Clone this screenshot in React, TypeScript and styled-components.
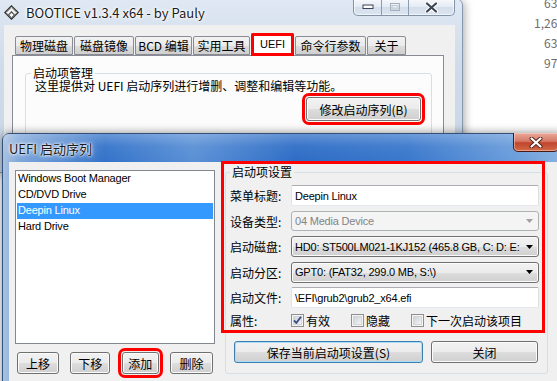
import React from "react";
import styled, { createGlobalStyle, css } from "styled-components";

const UI_FONT = `"Noto Sans CJK SC", "Liberation Sans", sans-serif`;
const LATIN_FONT = `"Liberation Sans", "Noto Sans CJK SC", sans-serif`;

const GlobalStyle = createGlobalStyle`
  *, *::before, *::after { box-sizing: border-box; }
  html, body { margin: 0; padding: 0; background: #fff; }
  body {
    width: 557px; height: 381px; overflow: hidden;
    font-family: ${UI_FONT}; font-size: 12px; color: #000;
  }
`;

const Desktop = styled.div`
  position: relative;
  width: 557px;
  height: 381px;
  overflow: hidden;
  background: #fff;
`;

const BackList = styled.div`
  position: absolute;
  top: -7px;
  right: -7px;
  width: 60px;
  display: flex;
  flex-direction: column;
  align-items: flex-end;
  font-size: 12px;
  line-height: 20px;
  color: #6d6d6d;
`;

/* ---------- main (inactive) window ---------- */
const MainWindow = styled.div`
  position: absolute;
  left: -4px;
  top: -2px;
  width: 467px;
  height: 175px;
  display: flex;
  flex-direction: column;
  padding: 0 7px 7px 7px;
  border: 1px solid #8798ad;
  border-radius: 7px 7px 0 0;
  background: linear-gradient(180deg, #dfe8f3 0%, #cfdbea 40%, #c8d6e7 100%);
  box-shadow: 2px 2px 8px rgba(0, 0, 0, 0.3);
`;

const TitleBar = styled.div`
  height: 26px;
  display: flex;
  align-items: center;
  flex-shrink: 0;
`;

const AppIcon = styled.svg`
  width: 15px;
  height: 15px;
  flex-shrink: 0;
`;

const WindowTitle = styled.div<{ $active?: boolean }>`
  margin-left: ${(p) => (p.$active ? 0 : 7)}px;
  font-family: "Noto Sans CJK SC", "Noto Sans", sans-serif;
  font-size: 13px;
  color: #1b1b1b;
  text-shadow: 0 0 6px #fff, 0 0 3px #fff, 0 0 2px #fff;
  white-space: nowrap;
`;

const CaptionGroup = styled.div`
  margin-left: auto;
  align-self: flex-start;
  display: flex;
  height: 17px;
  border: 1px solid #8293a8;
  border-top: none;
  border-radius: 0 0 5px 5px;
  overflow: hidden;
  background: linear-gradient(180deg, rgba(255,255,255,0.75) 0%, rgba(230,237,246,0.6) 50%, rgba(205,216,230,0.6) 51%, rgba(220,229,240,0.7) 100%);
  box-shadow: inset 0 0 0 1px rgba(255,255,255,0.6);
`;

const CaptionBtn = styled.div<{ $w: number }>`
  width: ${(p) => p.$w}px;
  height: 100%;
  display: flex;
  align-items: center;
  justify-content: center;
  & + & {
    border-left: 1px solid #8c9bb0;
  }
`;

const Client = styled.div`
  flex: 1;
  display: flex;
  flex-direction: column;
  background: #f0f0f0;
  padding: 8px 11px 0 8px;
`;

const TabStrip = styled.div`
  display: flex;
  align-items: flex-end;
  height: 22px;
  padding-left: 3px;
  position: relative;
  z-index: 1;
`;

const Tab = styled.div<{ $w: number; $sel?: boolean }>`
  width: ${(p) => p.$w}px;
  height: ${(p) => (p.$sel ? 23 : 19)}px;
  margin-right: 1px;
  display: flex;
  align-items: center;
  justify-content: center;
  white-space: nowrap;
  border: 1px solid #898c95;
  border-bottom: ${(p) => (p.$sel ? "none" : "1px solid #898c95")};
  border-radius: 2px 2px 0 0;
  background: ${(p) =>
    p.$sel ? "#ffffff" : "linear-gradient(180deg, #f2f2f2 0%, #ebebeb 50%, #dddddd 51%, #cfcfcf 100%)"};
  margin-bottom: ${(p) => (p.$sel ? -1 : 0)}px;
  padding-bottom: ${(p) => (p.$sel ? 2 : 0)}px;
  ${(p) =>
    p.$sel &&
    css`
      font-family: ${LATIN_FONT};
      font-size: 11px;
      outline: 3px solid #ff0000;
      outline-offset: -3px;
    `}
`;

const TabPanel = styled.div`
  flex: 1;
  display: flex;
  flex-direction: column;
  background: #fcfcfc;
  border: 1px solid #898c95;
  padding: 11px 11px 0 12px;
`;

const GroupBox = styled.fieldset`
  margin: 0;
  min-width: 0;
  border: 1px solid #d5dfe5;
  border-radius: 3px;
  display: flex;
  flex-direction: column;
`;

const GroupLegend = styled.legend<{ $lh?: number }>`
  padding: 0 2px;
  line-height: ${(p) => p.$lh ?? 14}px;
  color: #000;
`;

const MgmtGroup = styled(GroupBox)`
  padding: 0 10px 30px 5px;
`;

const Desc = styled.div`
  padding-left: 4px;
  line-height: 12px;
  margin-top: 1px;
  white-space: nowrap;
`;

const Btn = styled.button<{ $w: number; $default?: boolean; $marked?: boolean }>`
  width: ${(p) => p.$w}px;
  height: 22px;
  flex-shrink: 0;
  padding: 0;
  font: inherit;
  color: #000;
  white-space: nowrap;
  border: 1px solid ${(p) => (p.$default ? "#3c7fb1" : "#707070")};
  border-radius: 3px;
  background: linear-gradient(180deg, #f2f2f2 0%, #ebebeb 50%, #dddddd 51%, #cfcfcf 100%);
  box-shadow: inset 0 0 0 1px ${(p) => (p.$default ? "#a9dcf6" : "#fbfbfb")};
  ${(p) =>
    p.$marked &&
    css`
      outline: 3px solid #ff0000;
      outline-offset: 1px;
    `}
`;

const ModifyBtn = styled(Btn)`
  align-self: flex-end;
  height: 24px;
  margin-top: 5px;
`;

/* ---------- dialog ---------- */
const Dialog = styled.div`
  position: absolute;
  left: 2px;
  top: 133px;
  width: 564px;
  height: 270px;
  display: flex;
  flex-direction: column;
  padding: 0 6px;
  border: 1px solid #33517a;
  border-radius: 7px 7px 0 0;
  background: linear-gradient(90deg, #a8c1e0 0%, #7ea6da 3%, #3473c9 18%, #5a90d6 34%, #2e6dc6 52%, #3a78cc 72%, #6d9fdc 92%, #8ab2e2 100%);
  box-shadow: 0 0 10px rgba(0, 0, 0, 0.45);
`;

const DialogTitleBar = styled.div`
  height: 28px;
  display: flex;
  align-items: center;
  flex-shrink: 0;
  background: linear-gradient(180deg, rgba(255,255,255,0.25) 0%, rgba(255,255,255,0.05) 45%, rgba(0,0,0,0) 100%);
  margin: 0 -6px;
  padding: 0 0 0 6px;
`;

const CloseBtn = styled.div`
  margin-left: auto;
  align-self: flex-start;
  margin-top: -1px;
  margin-right: 6px;
  width: 46px;
  height: 19px;
  display: flex;
  align-items: center;
  justify-content: center;
  border: 1px solid #4a1a12;
  border-top: none;
  border-radius: 0 0 5px 5px;
  background: linear-gradient(180deg, #e9a99b 0%, #d77a66 45%, #c2452e 55%, #cf6a45 100%);
  box-shadow: inset 0 0 0 1px rgba(255, 220, 210, 0.5);
`;

const DialogClient = styled.div`
  flex: 1;
  display: flex;
  gap: 10px;
  align-items: flex-start;
  background: #f0f0f0;
  padding: 3px 0 0 6px;
`;

const LeftPane = styled.div`
  width: 200px;
  margin-top: 5px;
  display: flex;
  flex-direction: column;
  gap: 8px;
`;

const ListBox = styled.div`
  height: 174px;
  background: #fff;
  border: 1px solid #828790;
  padding: 0 1px;
  font-family: ${LATIN_FONT};
  font-size: 11px;
  letter-spacing: -0.2px;
`;

const ListItem = styled.div<{ $sel?: boolean }>`
  height: 16px;
  line-height: 15px;
  padding-left: 1px;
  white-space: nowrap;
  background: ${(p) => (p.$sel ? "#3399ff" : "transparent")};
  color: ${(p) => (p.$sel ? "#fff" : "#000")};
`;

const ListButtons = styled.div`
  display: flex;
  justify-content: space-between;
  padding: 0 2px;
`;

const SettingsGroup = styled(GroupBox)`
  width: 323px;
  padding: 0 8px 10px 4px;
`;

const Annotation = styled.div<{ $x: number; $y: number; $w: number; $h: number }>`
  position: absolute;
  left: ${(p) => p.$x}px;
  top: ${(p) => p.$y}px;
  width: ${(p) => p.$w}px;
  height: ${(p) => p.$h}px;
  border: 3px solid #ff0000;
  pointer-events: none;
`;

const FormGrid = styled.div`
  margin-top: 6px;
  display: grid;
  grid-template-columns: 61px 248px;
  grid-template-rows: repeat(5, 21px) 16px;
  row-gap: 4.5px;
  align-items: center;
`;

const FieldLabel = styled.div`
  white-space: nowrap;
`;

const TextBox = styled.div`
  height: 21px;
  display: flex;
  align-items: center;
  padding-left: 3px;
  background: #fff;
  border: 1px solid;
  border-color: #abadb3 #dbdfe6 #e3e9ef #e2e3ea;
  border-radius: 2px;
  white-space: nowrap;
  font-family: ${LATIN_FONT};
  font-size: 11px;
  letter-spacing: -0.2px;
`;

const Combo = styled.div<{ $disabled?: boolean }>`
  height: ${(p) => (p.$disabled ? 20 : 21)}px;
  display: flex;
  align-items: center;
  padding: 0 5px 0 3px;
  border: 1px solid ${(p) => (p.$disabled ? "#adb2b5" : "#707070")};
  border-radius: 3px;
  white-space: nowrap;
  overflow: hidden;
  font-family: ${LATIN_FONT};
  font-size: 11px;
  letter-spacing: -0.2px;
  color: ${(p) => (p.$disabled ? "#838383" : "#000")};
  background: ${(p) =>
    p.$disabled ? "#f4f4f4" : "linear-gradient(180deg, #f2f2f2 0%, #ebebeb 50%, #dddddd 51%, #cfcfcf 100%)"};
  box-shadow: inset 0 0 0 1px ${(p) => (p.$disabled ? "#f4f4f4" : "#fbfbfb")};
`;

const ComboText = styled.span`
  flex: 1;
  overflow: hidden;
`;

const ChecksRow = styled.div`
  display: flex;
  align-items: center;
  height: 16px;
`;

const CheckItem = styled.label<{ $w: number }>`
  width: ${(p) => p.$w}px;
  display: flex;
  align-items: center;
  gap: 2px;
  white-space: nowrap;
`;

const DialogButtons = styled.div`
  display: flex;
  gap: 8px;
  margin-top: 12.5px;
  padding-left: 4px;
`;

/* ---------- icons ---------- */
const Arrow = ({ color }: { color: string }) => (
  <svg width="7" height="4" viewBox="0 0 7 4">
    <path d="M0 0 H7 L3.5 4 Z" fill={color} />
  </svg>
);

const CheckBox = ({ checked }: { checked?: boolean }) => (
  <svg width="13" height="13" viewBox="0 0 13 13">
    <defs>
      <linearGradient id="cbg" x1="0" y1="0" x2="1" y2="1">
        <stop offset="0" stopColor="#cbcfd5" />
        <stop offset="1" stopColor="#f6f6f6" />
      </linearGradient>
    </defs>
    <rect x="0.5" y="0.5" width="12" height="12" fill="#f4f4f4" stroke="#8e8f8f" />
    <rect x="2.5" y="2.5" width="8" height="8" fill="url(#cbg)" stroke="#d3d5d8" />
    {checked && (
      <path d="M3 6.3 L5.3 9 L10 2.8" fill="none" stroke="#3a4f86" strokeWidth="1.9" strokeLinejoin="round" />
    )}
  </svg>
);

const tabs = [
  { t: "物理磁盘", w: 58 },
  { t: "磁盘镜像", w: 60 },
  { t: "BCD 编辑", w: 57 },
  { t: "实用工具", w: 57 },
  { t: "UEFI", w: 43, sel: true },
  { t: "命令行参数", w: 71 },
  { t: "关于", w: 39 },
];

const entries = ["Windows Boot Manager", "CD/DVD Drive", "Deepin Linux", "Hard Drive"];

export default function App() {
  return (
    <>
      <GlobalStyle />
      <Desktop>
        <BackList>
          <div>634</div>
          <div>1,260</div>
          <div>634</div>
          <div>976</div>
        </BackList>

        <MainWindow>
          <TitleBar>
            <AppIcon viewBox="0 0 15 15">
              <path d="M7.5 0.8 L14.2 7.5 L7.5 14.2 L0.8 7.5 Z" fill="#f4f4f4" stroke="#2b2b2b" strokeWidth="1.2" />
              <path d="M2.6 7.5 L7.5 2.6 L12.4 7.5" fill="none" stroke="#9a9a9a" strokeWidth="1" />
              <path d="M3.6 8.7 L7.5 12.6 L11.4 8.7" fill="none" stroke="#6a6a6a" strokeWidth="1" />
              <path d="M4.8 9.6 L7.5 6.9 L10.2 9.6" fill="none" stroke="#444" strokeWidth="1.1" />
            </AppIcon>
            <WindowTitle>BOOTICE v1.3.4 x64 - by Pauly</WindowTitle>
            <CaptionGroup>
              <CaptionBtn $w={27}>
                <svg width="12" height="6" viewBox="0 0 12 6">
                  <rect x="1" y="1" width="10" height="3.5" fill="#fff" stroke="#3b4454" strokeWidth="1" />
                </svg>
              </CaptionBtn>
              <CaptionBtn $w={27}>
                <svg width="12" height="10" viewBox="0 0 12 10">
                  <rect x="1.5" y="1.5" width="9" height="7" fill="none" stroke="#a6b0bd" strokeWidth="1" />
                  <rect x="3" y="3.5" width="6" height="3.5" fill="none" stroke="#c3cad3" strokeWidth="1" />
                </svg>
              </CaptionBtn>
              <CaptionBtn $w={46}>
                <svg width="13" height="11" viewBox="0 0 13 11">
                  <path d="M2 1.5 L11 9.5 M11 1.5 L2 9.5" stroke="#fff" strokeWidth="4.2" strokeLinecap="round" />
                  <path d="M2 1.5 L11 9.5 M11 1.5 L2 9.5" stroke="#3d4552" strokeWidth="2.2" strokeLinecap="round" />
                </svg>
              </CaptionBtn>
            </CaptionGroup>
          </TitleBar>
          <Client>
            <TabStrip>
              {tabs.map((t) => (
                <Tab key={t.t} $w={t.w} $sel={t.sel}>
                  {t.t}
                </Tab>
              ))}
            </TabStrip>
            <TabPanel>
              <MgmtGroup>
                <GroupLegend $lh={12}>启动项管理</GroupLegend>
                <Desc>这里提供对 UEFI 启动序列进行增删、调整和编辑等功能。</Desc>
                <ModifyBtn $w={115} $marked>
                  修改启动序列(B)
                </ModifyBtn>
              </MgmtGroup>
            </TabPanel>
          </Client>
        </MainWindow>

        <Dialog>
          <DialogTitleBar>
            <WindowTitle $active>UEFI 启动序列</WindowTitle>
            <CloseBtn>
              <svg width="14" height="11" viewBox="0 0 14 11">
                <path d="M2.5 1.5 L11.5 9.5 M11.5 1.5 L2.5 9.5" stroke="#4a1f18" strokeWidth="4" strokeLinecap="round" />
                <path d="M2.5 1.5 L11.5 9.5 M11.5 1.5 L2.5 9.5" stroke="#fff" strokeWidth="2.2" strokeLinecap="round" />
              </svg>
            </CloseBtn>
          </DialogTitleBar>
          <DialogClient>
            <LeftPane>
              <ListBox>
                {entries.map((e) => (
                  <ListItem key={e} $sel={e === "Deepin Linux"}>
                    {e}
                  </ListItem>
                ))}
              </ListBox>
              <ListButtons>
                <Btn $w={42}>上移</Btn>
                <Btn $w={40}>下移</Btn>
                <Btn $w={37} $marked>
                  添加
                </Btn>
                <Btn $w={43}>删除</Btn>
              </ListButtons>
            </LeftPane>

            <SettingsGroup>
              <GroupLegend>启动项设置</GroupLegend>
              <FormGrid>
                <FieldLabel>菜单标题:</FieldLabel>
                <TextBox>Deepin Linux</TextBox>
                <FieldLabel>设备类型:</FieldLabel>
                <Combo $disabled>
                  <ComboText>04 Media Device</ComboText>
                  <Arrow color="#a0a0a0" />
                </Combo>
                <FieldLabel>启动磁盘:</FieldLabel>
                <Combo>
                  <ComboText>HD0: ST500LM021-1KJ152 (465.8 GB, C: D: E:</ComboText>
                  <Arrow color="#000" />
                </Combo>
                <FieldLabel>启动分区:</FieldLabel>
                <Combo>
                  <ComboText>GPT0: (FAT32, 299.0 MB, S:\)</ComboText>
                  <Arrow color="#000" />
                </Combo>
                <FieldLabel>启动文件:</FieldLabel>
                <TextBox>\EFI\grub2\grub2_x64.efi</TextBox>
                <FieldLabel>属性:</FieldLabel>
                <ChecksRow>
                  <CheckItem $w={60}>
                    <CheckBox checked />
                    有效
                  </CheckItem>
                  <CheckItem $w={60}>
                    <CheckBox />
                    隐藏
                  </CheckItem>
                  <CheckItem $w={120}>
                    <CheckBox />
                    下一次启动该项目
                  </CheckItem>
                </ChecksRow>
              </FormGrid>
              <DialogButtons>
                <Btn $w={189} $default>
                  保存当前启动项设置(S)
                </Btn>
                <Btn $w={107}>关闭</Btn>
              </DialogButtons>
            </SettingsGroup>
          </DialogClient>
        </Dialog>

        <Annotation $x={221} $y={161} $w={324} $h={172} />
      </Desktop>
    </>
  );
}
